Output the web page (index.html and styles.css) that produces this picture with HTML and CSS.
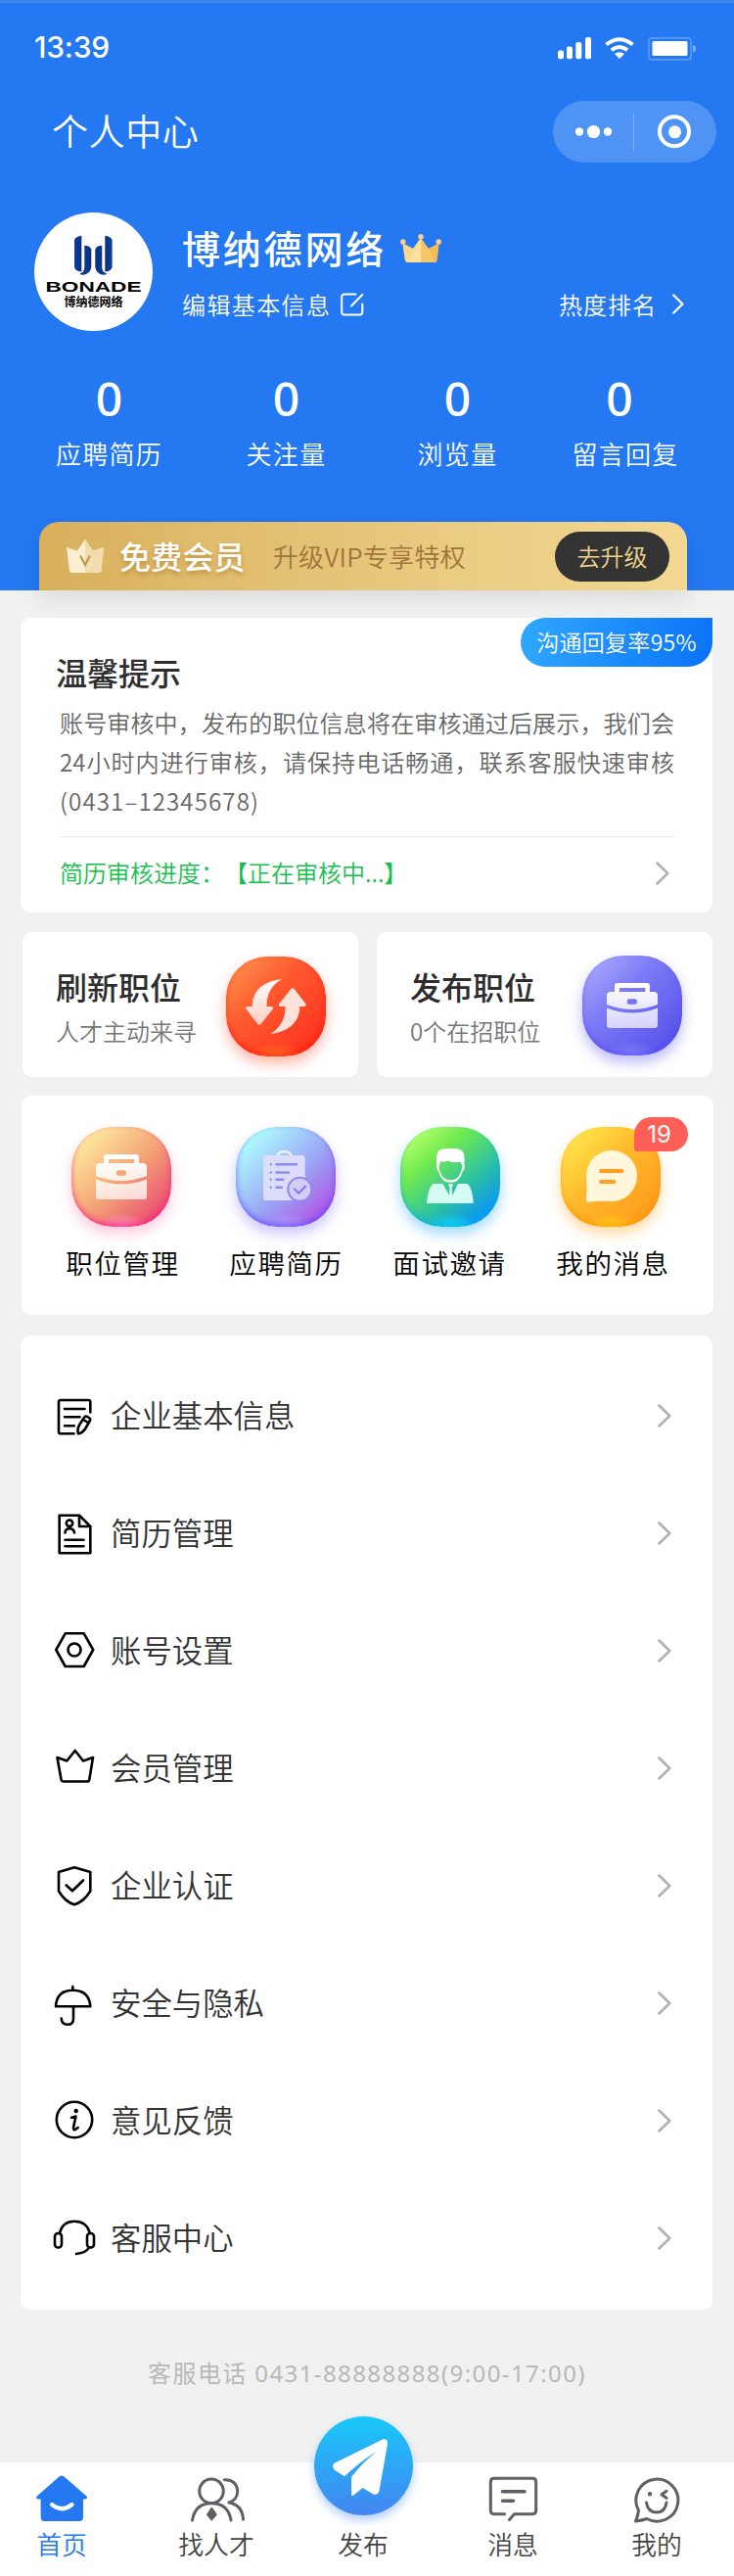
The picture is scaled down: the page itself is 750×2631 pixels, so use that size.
FILE: index.html
```html
<!DOCTYPE html>
<html lang="zh-CN">
<head>
    <meta charset="UTF-8">
    <meta name="viewport" content="width=device-width, initial-scale=1.0">
    <title>个人中心</title>
    <link rel="stylesheet" href="styles.css">
</head>
<body>
    <!-- shared icons -->
    <svg class="sprite" width="0" height="0">
        <defs>
            <linearGradient id="fadeWhite" x1="0" y1="0" x2="0" y2="1">
                <stop offset="0" stop-color="#fff"/>
                <stop offset="1" stop-color="#fff" stop-opacity=".7"/>
            </linearGradient>
            <linearGradient id="blueBar" x1="0" y1="0" x2="1" y2="0">
                <stop offset="0" stop-color="#0a3fa0"/>
                <stop offset="1" stop-color="#0c2f7c"/>
            </linearGradient>
        </defs>
        <symbol id="arrow" viewBox="0 0 14 24">
            <path d="M1.5 1.5 L12.2 12 L1.5 22.5" fill="none" stroke="currentColor" stroke-width="2.7" stroke-linecap="round" stroke-linejoin="round"/>
        </symbol>
        <symbol id="briefcase" viewBox="0 0 102 102">
            <path fill="url(#fadeWhite)" fill-rule="evenodd" d="M33 37 V31 Q33 28 36 28 H66 Q69 28 69 31 V37 H73 Q77 37 77 41 V50 Q51 60 25 50 V41 Q25 37 29 37 Z M38 33 V37 H64.3 V33 Z M48 44.3 Q45.7 44.3 45.7 47 Q45.7 49.7 48 49.7 H54 Q56 49.7 56 47 Q56 44.3 54 44.3 Z M25 53.5 Q51 63.5 77 53.5 V71 Q77 74 74 74 H28 Q25 74 25 71 Z"/>
        </symbol>
    </svg>

    <header class="header">
        <div class="status-bar">
            <span class="time">13:39</span>
            <svg class="status-icons" width="142" height="24" viewBox="0 0 142 24" fill="#fff">
                <rect x="0" y="13.5" width="6" height="8.7" rx="2"/>
                <rect x="9" y="9.5" width="6" height="12.7" rx="2"/>
                <rect x="18.3" y="5" width="6" height="17.2" rx="2"/>
                <rect x="28" y="0" width="6" height="22.2" rx="2"/>
                <g fill="none" stroke="#fff" stroke-width="4">
                    <path d="M49.5 7.5 Q63 -3 76.5 7.5"/>
                    <path d="M54.8 13.2 Q63 6.8 71.2 13.2"/>
                </g>
                <path d="M58 17 Q63 13.4 68 17 L63 22 Z"/>
                <rect x="93" y=".8" width="43" height="22" rx="3" fill="none" stroke="#fff" stroke-opacity=".35" stroke-width="1.2"/>
                <rect x="96.5" y="4" width="36" height="15" rx="1.5"/>
                <path d="M138 8 Q141 8.500 141 12 Q141 15 138 15.500 Z" fill-opacity=".4"/>
            </svg>
        </div>

        <div class="nav-bar">
            <h1>个人中心</h1>
            <div class="capsule">
                <svg width="167" height="62" viewBox="0 0 167 62" fill="#fff">
                    <circle cx="27" cy="31.500" r="4.200"/>
                    <circle cx="41.500" cy="31.500" r="6.600"/>
                    <circle cx="56" cy="31.500" r="4.200"/>
                    <rect x="82" y="13" width="1" height="38" fill-opacity=".3"/>
                    <circle cx="124" cy="31.300" r="15" fill="none" stroke="#fff" stroke-width="4"/>
                    <circle cx="124.500" cy="31.800" r="6.500"/>
                </svg>
            </div>
        </div>

        <div class="profile">
            <svg class="avatar" width="121" height="121" viewBox="0 0 121 121">
                <circle cx="60.500" cy="60.500" r="60.500" fill="#fff"/>
                <g fill="url(#blueBar)">
                    <path d="M41 28 Q43 24 48.300 23.700 V60.500 Q42 60 41 56 Z"/>
                    <path d="M51.300 33.700 Q57 34 58.300 37.500 V56 Q57 63 50 63.800 Q47 63.800 46.500 62.500 Q51.300 61 51.300 56 Z"/>
                </g>
                <g fill="url(#blueBar)" transform="translate(120.600 0) scale(-1 1)">
                    <path d="M41 28 Q43 24 48.300 23.700 V60.500 Q42 60 41 56 Z"/>
                    <path d="M51.300 33.700 Q57 34 58.300 37.500 V56 Q57 63 50 63.800 Q47 63.800 46.500 62.500 Q51.300 61 51.300 56 Z"/>
                </g>
                <text class="logo-en" x="11.500" y="81" textLength="98" lengthAdjust="spacingAndGlyphs">BONADE</text>
                <text class="logo-cn" x="30.500" y="96.300" textLength="60" lengthAdjust="spacingAndGlyphs">博纳德网络</text>
            </svg>
            <div class="profile-info">
                <div class="name-row">
                    <span class="name">博纳德网络</span>
                    <svg width="42" height="30" viewBox="0 0 42 30">
                        <path d="M2.500 9.500 L13 15 L21 4 L29 15 L39.500 9.500 L37.500 27 Q37 29 35 29 H7.500 Q5.500 29 5 27 Z" fill="#f9c667"/>
                        <path d="M21 4 L13 15 L2.500 9.500 L5 27 Q5.500 29 7.500 29 Z" fill="#fbd88d"/>
                        <path d="M21 4 V29 H7.500 Z" fill="#fde0a0"/>
                        <path d="M39.500 9.500 L37.500 27 Q37 29 35 29 L29 15 Z" fill="#f5bb57"/>
                        <g fill="#fbd084"><circle cx="2.800" cy="8" r="2.700"/><circle cx="21" cy="2.800" r="2.700"/><circle cx="39.200" cy="8" r="2.700"/></g>
                    </svg>
                </div>
                <div class="sub-row">
                    <span>编辑基本信息</span>
                    <svg class="edit-icon" width="24" height="24" viewBox="0 0 24 24" fill="none" stroke="#fff" stroke-width="2" stroke-linecap="round">
                        <path d="M15.500 1.500 H4 Q1.200 1.500 1.200 4.300 V19.800 Q1.200 22.500 4 22.500 H19.500 Q22.300 22.500 22.300 19.800 V11.500"/>
                        <path d="M22.300 2 L11 13.500"/>
                    </svg>
                    <a class="rank">热度排名<svg width="12" height="21"><use href="#arrow"/></svg></a>
                </div>
            </div>
        </div>

        <ul class="stats">
            <li><b>0</b><span>应聘简历</span></li>
            <li><b>0</b><span>关注量</span></li>
            <li><b>0</b><span>浏览量</span></li>
            <li><b>0</b><span>留言回复</span></li>
        </ul>

        <div class="vip">
            <svg width="38" height="35" viewBox="0 0 38 35">
                <path d="M0 8 L11 11.500 L19 0 L27 11.500 L38 8 L35.500 32 Q35 34 33 34 H5.500 Q3.500 34 3 32 Z" fill="#fbefd2"/>
                <path d="M19 0 L27 11.500 L38 8 L35.500 32 Q35 34 33 34 H19 Z" fill="#f1dcae"/>
                <path d="M14 16.500 L19 26 L24 16.500" fill="none" stroke="#c39645" stroke-width="2.200"/>
            </svg>
            <strong>免费会员</strong>
            <span>升级VIP专享特权</span>
            <button>去升级</button>
        </div>
    </header>

    <main>
        <section class="card notice">
            <div class="reply-rate">沟通回复率95%</div>
            <h2>温馨提示</h2>
            <p>账号审核中，发布的职位信息将在审核通过后展示，我们会24小时内进行审核，请保持电话畅通，联系客服快速审核</p>
            <p class="tel">(0431–12345678)</p>
            <div class="progress">
                <span>简历审核进度：【正在审核中...】</span>
                <svg width="14" height="24"><use href="#arrow"/></svg>
            </div>
        </section>

        <div class="jobs">
            <section class="card job">
                <div>
                    <h2>刷新职位</h2>
                    <p>人才主动来寻</p>
                </div>
                <div class="tile tile-red">
                    <svg width="102" height="102" viewBox="0 0 102 102" fill="url(#fadeWhite)">
                        <path d="M57 23 C40 25 27 33 26.700 51 L21.500 51 Q19.300 52 21 54.300 L32 68.500 Q34 71 36 68.500 L47.500 54 Q49 52 47 51 L41.500 51 C41 40 46 29 57 23 Z"/>
                        <path fill="#ffe3da" d="M57 23 C40 25 27 33 26.700 51 L21.500 51 Q19.300 52 21 54.300 L32 68.500 Q34 71 36 68.500 L47.500 54 Q49 52 47 51 L41.500 51 C41 40 46 29 57 23 Z" transform="rotate(180 51 51)"/>
                    </svg>
                </div>
            </section>
            <section class="card job">
                <div>
                    <h2>发布职位</h2>
                    <p>0个在招职位</p>
                </div>
                <div class="tile tile-indigo">
                    <svg width="102" height="102"><use href="#briefcase"/></svg>
                </div>
            </section>
        </div>

        <section class="card shortcuts">
            <div class="shortcut">
                <div class="tile tile-pink">
                    <svg width="102" height="102"><use href="#briefcase"/></svg>
                </div>
                <span>职位管理</span>
            </div>
            <div class="shortcut">
                <div class="tile tile-violet">
                    <svg width="102" height="102" viewBox="0 0 102 102" fill="none" stroke-linecap="round" stroke-linejoin="round">
                        <path d="M42 30 Q43 25.300 49.500 25.300 Q56 25.300 57 30" stroke="#eef2ff" stroke-width="2.500"/>
                        <rect x="28" y="29" width="42.700" height="46" rx="3" fill="#dcdcfb"/>
                        <g stroke="#8c8cf0" stroke-width="2.400">
                            <path d="M35.700 38.300 h.1 M41.500 38.300 H62"/>
                            <path d="M35.700 46.500 h.1 M41.500 46.500 H54"/>
                            <path d="M35.700 53.700 h.1 M41.500 53.700 H48.500"/>
                            <path d="M35.700 61.700 h.1 M41.500 61.700 H47"/>
                        </g>
                        <circle cx="65.300" cy="63.700" r="12" fill="#d3ccf7" stroke="#9288ea" stroke-width="2"/>
                        <path d="M60 63.500 L64.300 67.700 L71 60.700" stroke="#8678e6" stroke-width="2.200"/>
                    </svg>
                </div>
                <span>应聘简历</span>
            </div>
            <div class="shortcut">
                <div class="tile tile-green">
                    <svg width="102" height="102" viewBox="0 0 102 102" fill="#fff">
                        <path fill-rule="evenodd" d="M37 39 V31 Q37 22 47 22 H57 Q65.500 22.500 65.500 31 V39 Q66.500 41 65 44 L63.500 46 Q62 52 57 55.700 Q51 57.500 46 55.700 Q40.500 52 39.500 46 L38 44 Q36 41 37 39 Z M41.500 35 Q40.500 38 39.500 39 Q40 47 44 51.500 Q47 54.300 51.300 54.300 Q56 54.300 59 51.500 Q62.500 47 63.500 39 Q62.500 38 61.500 35.500 Q54 37.500 49 34.500 Q45 36.500 41.500 35 Z"/>
                        <path fill="#d5fbf4" d="M27 78 Q28.500 61 34 58 H43.500 L50 70 L50.500 62 L49 59 L50 58 H53 L54 59 L52.700 62 L53.300 70 L59 58 H68.500 Q73.500 61 74.700 78 Z"/>
                    </svg>
                </div>
                <span>面试邀请</span>
            </div>
            <div class="shortcut">
                <div class="tile tile-orange">
                    <svg width="102" height="102" viewBox="0 0 102 102">
                        <path d="M26 50 A26 26 0 1 1 52 76 Q40 75 28 76.800 Q26 77 26 75 Q27 62 26 50 Z" fill="#fff6dc"/>
                        <path d="M41 45 H62.500 M41 56 H54.500" stroke="#ffa024" stroke-width="4" stroke-linecap="round"/>
                    </svg>
                    <em class="count">19</em>
                </div>
                <span>我的消息</span>
            </div>
        </section>

        <ul class="card menu">
            <li>
                <svg class="menu-icon" viewBox="0 0 44 44">
                    <path d="M38.300 18.500 V8 Q38.300 6 36.300 6 H8 Q6 6 6 8 V38.300 Q6 40.300 8 40.300 H21.500 M12 15 H32.500 M12 23.300 H27.500 M12 32.300 H21.800"/>
                    <path d="M26 40.300 C25 37 25.500 34 27.300 31 L32.200 23.500 Q33.500 22 35.300 23 L37 24 Q38.800 25.200 37.900 27 L33 35.500 Q30.500 39.500 26 40.300 Z M32 26.500 L36 29"/>
                </svg>
                <span>企业基本信息</span>
                <svg class="more" width="14" height="24"><use href="#arrow"/></svg>
            </li>
            <li>
                <svg class="menu-icon" viewBox="0 0 44 44">
                    <path d="M27 3.700 H6.700 V42.300 H38.300 V15 Z M27 3.700 V15 H38.300 M12.500 28.700 H31.500 M12.500 35.300 H31.500"/>
                    <circle cx="17" cy="11.700" r="3.200"/>
                    <path d="M12.500 21.500 Q12.800 17.300 17.200 17.300 Q21.500 17.300 22 21.500"/>
                </svg>
                <span>简历管理</span>
                <svg class="more" width="14" height="24"><use href="#arrow"/></svg>
            </li>
            <li>
                <svg class="menu-icon" viewBox="0 0 44 44">
                    <path d="M3.300 21 L12.700 4.300 H31.700 L41.200 21 L31.700 38 H12.700 Z"/>
                    <circle cx="22" cy="21" r="6.500"/>
                </svg>
                <span>账号设置</span>
                <svg class="more" width="14" height="24"><use href="#arrow"/></svg>
            </li>
            <li>
                <svg class="menu-icon" viewBox="0 0 44 44">
                    <path d="M4.500 11 L14.300 14.500 L22.700 4 L31 14.500 L41 11 L37.300 33.500 Q37 35.500 35 35.500 H11 Q9 35.500 8.500 33.500 Z"/>
                </svg>
                <span>会员管理</span>
                <svg class="more" width="14" height="24"><use href="#arrow"/></svg>
            </li>
            <li>
                <svg class="menu-icon" viewBox="0 0 44 44">
                    <path d="M22 3.200 L38.300 8 V27.500 Q31.500 38.500 22 41.200 Q12.500 38.500 6 27.500 V8 Z M13.700 21.500 L20 27.300 L31 16.500"/>
                </svg>
                <span>企业认证</span>
                <svg class="more" width="14" height="24"><use href="#arrow"/></svg>
            </li>
            <li>
                <svg class="menu-icon" viewBox="0 0 44 44">
                    <path d="M20.300 5 V8.500 M3 25.300 Q4 8.700 20.500 8.700 Q37 8.700 38.300 25.300 Z M21 25.300 V38 Q21 43.800 15 43.800 Q9 43.800 8.700 37.500"/>
                </svg>
                <span>安全与隐私</span>
                <svg class="more" width="14" height="24"><use href="#arrow"/></svg>
            </li>
            <li>
                <svg class="menu-icon" viewBox="0 0 44 44">
                    <circle cx="22" cy="21" r="18.200"/>
                    <circle cx="23.700" cy="12" r="2.200" fill="#000" stroke="none"/>
                    <path d="M19 18.800 Q21.500 18.500 23.500 17.500 L21 29 Q21 32 23 31 L25.700 29"/>
                </svg>
                <span>意见反馈</span>
                <svg class="more" width="14" height="24"><use href="#arrow"/></svg>
            </li>
            <li>
                <svg class="menu-icon" viewBox="0 0 44 44">
                    <path d="M7 16.500 Q10 4.700 22 4.700 Q34.500 4.700 37.700 16.500 M37 31.500 Q34 37 24 38"/>
                    <rect x="2" y="17" width="7" height="14.500" rx="3.200"/>
                    <rect x="35" y="17" width="7" height="14.500" rx="3.200"/>
                </svg>
                <span>客服中心</span>
                <svg class="more" width="14" height="24"><use href="#arrow"/></svg>
            </li>
        </ul>

        <p class="service-tel">客服电话 0431-88888888(9:00-17:00)</p>
    </main>

    <nav class="tab-bar">
        <a class="active">
            <svg width="60" height="50" viewBox="0 0 60 50">
                <path d="M27.500 1.500 Q30 -.3 32.500 1.500 L55.500 21.500 Q57 24 54 24.500 H52 V43 Q52 47 48 47 H12.500 Q8.600 47 8.600 43 V24.500 H6 Q3 24 4.700 21.500 Z" fill="#2478f2"/>
                <path d="M20 30 Q30 38.500 40.500 30" fill="none" stroke="#fff" stroke-width="4.200" stroke-linecap="round"/>
            </svg>
            <span>首页</span>
        </a>
        <a>
            <svg class="line-icon" width="60" height="50" viewBox="0 0 60 50">
                <circle cx="25" cy="16.300" r="12.300"/>
                <path d="M5.500 46 C7.500 34 14 28.700 25 28.700 C36 28.700 43 34 45 46 M38.300 4.700 C47 4 51.700 10 51.700 16.500 C51.700 22 48 26.500 43 28 C51 29.500 57 34 57.500 45.300"/>
                <path d="M25.300 33.500 L30 40.300 L25.300 45.800 L20.700 40.300 Z" fill="#5f5f66" stroke-width="1.500"/>
            </svg>
            <span>找人才</span>
        </a>
        <a class="publish">
            <div class="publish-btn">
                <svg width="101" height="101" viewBox="0 0 101 101" fill="#fff">
                    <path d="M70 23.500 Q75.500 22 75 28 L66.500 76 Q65 81 60.500 79.500 L49.500 73 L40 80.700 Q38 81.500 38 79.500 V62 Q50 46 64.500 35.500 Q48 45 31 61.300 L20.500 54.500 Q17.500 49.500 21 47.500 Z"/>
                </svg>
            </div>
            <span>发布</span>
        </a>
        <a>
            <svg class="line-icon" width="60" height="50" viewBox="0 0 60 50">
                <path d="M21.500 39.700 H11 Q7.300 39.700 7.300 36 V7 Q7.300 3.300 11 3.300 H50 Q53.700 3.300 53.700 7 V36 Q53.700 39.700 50 39.700 H31.500 L26.500 45.500"/>
                <path d="M19.500 16.700 H42 M19.500 26.300 H30.500" stroke-width="3.600"/>
            </svg>
            <span>消息</span>
        </a>
        <a>
            <svg class="line-icon" width="60" height="50" viewBox="0 0 60 50">
                <path d="M11.500 36 A21.500 21.500 0 1 1 20 44.500 Q14 46.500 8.500 47 Q11 41 11.500 36 Z"/>
                <circle cx="23" cy="19.300" r="1.200" fill="#5f5f66" stroke-width="2"/>
                <path d="M40 16.300 L35 19.700 L40 23.300 M19.500 28 Q21 38 30 38 Q38.500 38 40 28"/>
            </svg>
            <span>我的</span>
        </a>
    </nav>
</body>
</html>
```

FILE: styles.css
```css
* {
    box-sizing: border-box;
    margin: 0;
    padding: 0;
}
body {
    width: 750px;
    background: #f1f1f1;
    color: #333;
    font-family: "Noto Sans CJK SC", sans-serif;
    font-weight: 350;
    text-spacing-trim: space-all;
}
ul {
    list-style: none;
}
svg {
    display: block;
    flex-shrink: 0;
}
.sprite {
    position: absolute;
}

/* header */
.header {
    height: 603px;
    padding: 0 40px;
    border-top: 3px solid #3a85f2;
    background: #2478f2;
    color: #fff;
    display: flex;
    flex-direction: column;
}
.status-bar {
    display: flex;
    justify-content: space-between;
    align-items: center;
    height: 90px;
    margin: 0 -2px 0 -5px;
}
.status-icons {
    margin-top: 4px;
}
.time {
    font: 450 30px Inter, sans-serif;
    letter-spacing: -0.2px;
}
.nav-bar {
    display: flex;
    justify-content: space-between;
    align-items: center;
    height: 82px;
    margin: 0 -22px 0 13px;
}
.nav-bar h1 {
    font-size: 37px;
    font-weight: 350;
    letter-spacing: 0.6px;
    padding-bottom: 2px;
}
.capsule {
    height: 63px;
    border-radius: 32px;
    background: rgba(255, 255, 255, 0.2);
}
.profile {
    display: flex;
    margin: 42px 0 0 -5px;
}
.logo-en {
    font: bold 15px "Liberation Sans", sans-serif;
}
.logo-cn {
    font: 700 12px "Noto Sans CJK SC", sans-serif;
}
.profile-info {
    flex: 1;
    margin-left: 30px;
}
.name-row {
    display: flex;
    align-items: center;
    height: 72px;
}
.name {
    font-size: 39px;
    font-weight: 500;
    letter-spacing: 2.8px;
    margin-right: 14px;
    padding-bottom: 3px;
}
.name-row svg {
    margin-top: 2px;
}
.sub-row {
    display: flex;
    align-items: center;
    height: 44px;
    font-size: 24px;
    letter-spacing: 1.4px;
}
.sub-row span {
    padding-bottom: 2px;
}
.edit-icon {
    margin-left: 10px;
}
.rank {
    display: flex;
    align-items: center;
    gap: 16px;
    margin-left: auto;
    margin-right: 11px;
    padding-bottom: 1px;
    letter-spacing: 1px;
}
.stats {
    display: grid;
    grid-template-columns: 143px 219px 131px 212px;
    margin: 32px -40px 0 0;
}
.stats li {
    display: flex;
    flex-direction: column;
    align-items: center;
}
.stats b {
    font: 500 48px/74px "Noto Sans", sans-serif;
}
.stats li:last-child b {
    margin-right: 12px;
}
.stats span {
    font-size: 26px;
    line-height: 40px;
    letter-spacing: 1.3px;
    margin-top: -1px;
}
.vip {
    display: flex;
    align-items: center;
    width: 662px;
    height: 70px;
    margin-top: auto;
    padding: 0 18px 0 28px;
    border-radius: 20px 20px 0 0;
    background: linear-gradient(90deg, #d8b05c, #e6c67b 50%, #f3d892);
    box-shadow: 0 8px 24px rgba(0, 0, 0, 0.1);
}
.vip strong {
    font-size: 32px;
    font-weight: 500;
    margin-left: 16px;
    padding-bottom: 2px;
    letter-spacing: 0.2px;
    text-shadow: 0 3px 4px rgba(160, 105, 20, 0.5);
}
.vip span {
    font-size: 26px;
    letter-spacing: 0.3px;
    color: #a17539;
    margin-left: 28px;
    padding-bottom: 1px;
}
.vip button {
    width: 117px;
    height: 51px;
    margin-left: auto;
    padding-bottom: 2px;
    border: none;
    border-radius: 26px;
    background: #333;
    color: #f0d58c;
    font: 350 24px "Noto Sans CJK SC", sans-serif;
}

/* cards */
main {
    padding: 28px 21px 0;
}
.card {
    background: #fff;
    border-radius: 10px;
}
.card h2 {
    font-size: 32px;
    font-weight: 500;
    line-height: 40px;
    color: #2d2d2d;
}
.notice {
    position: relative;
    width: 707px;
    height: 301px;
    padding: 35px 39px 0 40px;
}
.notice h2 {
    margin-left: -4px;
}
.notice p {
    margin-top: 12px;
    font-size: 24.1px;
    line-height: 40px;
    color: #666;
    text-align: justify;
    text-align-last: justify;
}
.notice .tel {
    margin-top: 0;
    letter-spacing: 1.1px;
    text-align-last: left;
}
.reply-rate {
    position: absolute;
    top: 0;
    right: 0;
    width: 196px;
    height: 50px;
    border-radius: 25px 0 25px 25px;
    background: linear-gradient(100deg, #30a8ff, #0a72f8);
    color: #fff;
    font-size: 23px;
    letter-spacing: 0.3px;
    line-height: 49px;
    text-align: center;
}
.progress {
    display: flex;
    align-items: center;
    justify-content: space-between;
    height: 74px;
    margin-top: 16px;
    padding-right: 5px;
    border-top: 1px solid #e8e8e8;
    color: #15bf4d;
    font-size: 24px;
}
.progress span {
    padding-bottom: 2px;
}
.progress svg,
.more {
    color: #b2b2b2;
}
.jobs {
    display: grid;
    grid-template-columns: 343px 343px;
    gap: 19px;
    margin: 20px 0 0 2px;
}
.job {
    display: flex;
    justify-content: space-between;
    height: 148px;
    padding: 25px 33px 0 34px;
}
.job h2 {
    margin-top: 10px;
}
.job p {
    margin-top: 6px;
    font-size: 24px;
    line-height: 40px;
    color: #777;
}

/* gradient icon tiles */
.tile {
    position: relative;
    width: 102px;
    height: 102px;
    border-radius: 42px;
}
.tile-red {
    background: radial-gradient(ellipse 28px 14px at 50% 100%, #ff7a22, transparent), linear-gradient(135deg, #ff9a50, #ff5a30 40%, #ff2a1a);
    box-shadow: 0 7px 14px rgba(255, 70, 40, 0.4), inset 0 -3px 6px rgba(255, 20, 0, 0.6);
}
.tile-indigo {
    background: radial-gradient(ellipse 28px 14px at 50% 100%, #8a85f5, transparent), linear-gradient(135deg, #b4b2ff, #7c7af6 40%, #4f4be8);
    box-shadow: 0 7px 14px rgba(90, 85, 240, 0.4), inset 0 -3px 6px rgba(80, 70, 255, 0.6);
}
.job .tile-indigo {
    margin: -1px -2px 0 0;
}
.tile-pink {
    margin-right: 3px;
    background: radial-gradient(ellipse 28px 14px at 50% 100%, #ff94c0, transparent), linear-gradient(135deg, #fdeb9c 12%, #f4a276 52%, #ea4a72 90%);
    box-shadow: 0 7px 14px rgba(255, 80, 150, 0.3), inset 0 -3px 6px rgba(255, 20, 130, 0.7);
}
.tile-violet {
    margin-right: 1px;
    background: radial-gradient(ellipse 28px 14px at 50% 100%, #b0a0f8, transparent), linear-gradient(135deg, #aefaff 14%, #9aa6f5 55%, #b055e6 88%);
    box-shadow: 0 7px 14px rgba(110, 90, 255, 0.35), inset 0 -3px 6px rgba(90, 70, 255, 0.7);
}
.tile-green {
    background: radial-gradient(ellipse 28px 14px at 50% 100%, #10d8f0, transparent), linear-gradient(140deg, #b2ff68 12%, #70ea50 32%, #2cc0a4 62%, #0894f8 88%);
    box-shadow: 0 7px 14px rgba(20, 160, 250, 0.4), inset 0 -3px 6px rgba(0, 180, 240, 0.6);
}
.tile-orange {
    margin-right: 5px;
    background: radial-gradient(ellipse 28px 14px at 50% 100%, #ffd414, transparent), linear-gradient(135deg, #ffe44a 12%, #ffb92c 45%, #ff9418);
    box-shadow: 0 7px 14px rgba(255, 160, 30, 0.4), inset 0 -3px 6px rgba(255, 145, 0, 0.6);
}
.count {
    position: absolute;
    top: -10px;
    left: 75px;
    width: 55px;
    height: 35px;
    padding-right: 4px;
    border-radius: 18px 18px 18px 3px;
    background: #ff5f57;
    color: #fff;
    font: normal 400 24px/36px Inter, sans-serif;
    text-align: center;
}
.shortcuts {
    display: grid;
    grid-template-columns: repeat(4, 167px);
    width: 707px;
    height: 224px;
    margin: 19px 0 0 1px;
    padding: 32px 0 0 20px;
}
.shortcut {
    display: flex;
    flex-direction: column;
    align-items: center;
}
.shortcut span {
    margin-top: 16px;
    color: #000;
    font-size: 27.5px;
    line-height: 40px;
    letter-spacing: 1.6px;
}

/* menu list */
.menu {
    width: 707px;
    height: 995px;
    margin-top: 21px;
    padding: 22px 42px 0 33px;
}
.menu li {
    display: flex;
    align-items: center;
    height: 120px;
    font-size: 31.4px;
}
.menu li span {
    padding-bottom: 3px;
}
.menu-icon {
    width: 44px;
    height: 44px;
    margin-right: 15px;
    overflow: visible;
    fill: none;
    stroke: #000;
    stroke-width: 2.6;
    stroke-linecap: round;
    stroke-linejoin: round;
}
.more {
    margin-left: auto;
}
.service-tel {
    margin-top: 45px;
    color: #b8b8b8;
    font-family: "Noto Sans", "Noto Sans CJK SC", sans-serif;
    font-size: 24px;
    font-weight: 400;
    line-height: 40px;
    letter-spacing: 1.4px;
    text-align: center;
}

/* bottom tabs */
.tab-bar {
    display: grid;
    grid-template-columns: 126px 190px 110px 196px 98px;
    height: 116px;
    margin-top: 71px;
    padding-top: 13px;
    background: #fff;
}
.tab-bar a {
    display: flex;
    flex-direction: column;
    align-items: center;
    color: #444;
    font-size: 25.8px;
    line-height: 40px;
}
.tab-bar .active {
    color: #2478f2;
}
.line-icon {
    fill: none;
    stroke: #5f5f66;
    stroke-width: 3;
    stroke-linecap: round;
    stroke-linejoin: round;
}
.publish-btn {
    width: 101px;
    height: 101px;
    margin: -60px 0 9px;
    border-radius: 50%;
    background: linear-gradient(#18c8f8, #4285f2);
    box-shadow: 0 5px 10px rgba(66, 133, 242, 0.4);
}
```
